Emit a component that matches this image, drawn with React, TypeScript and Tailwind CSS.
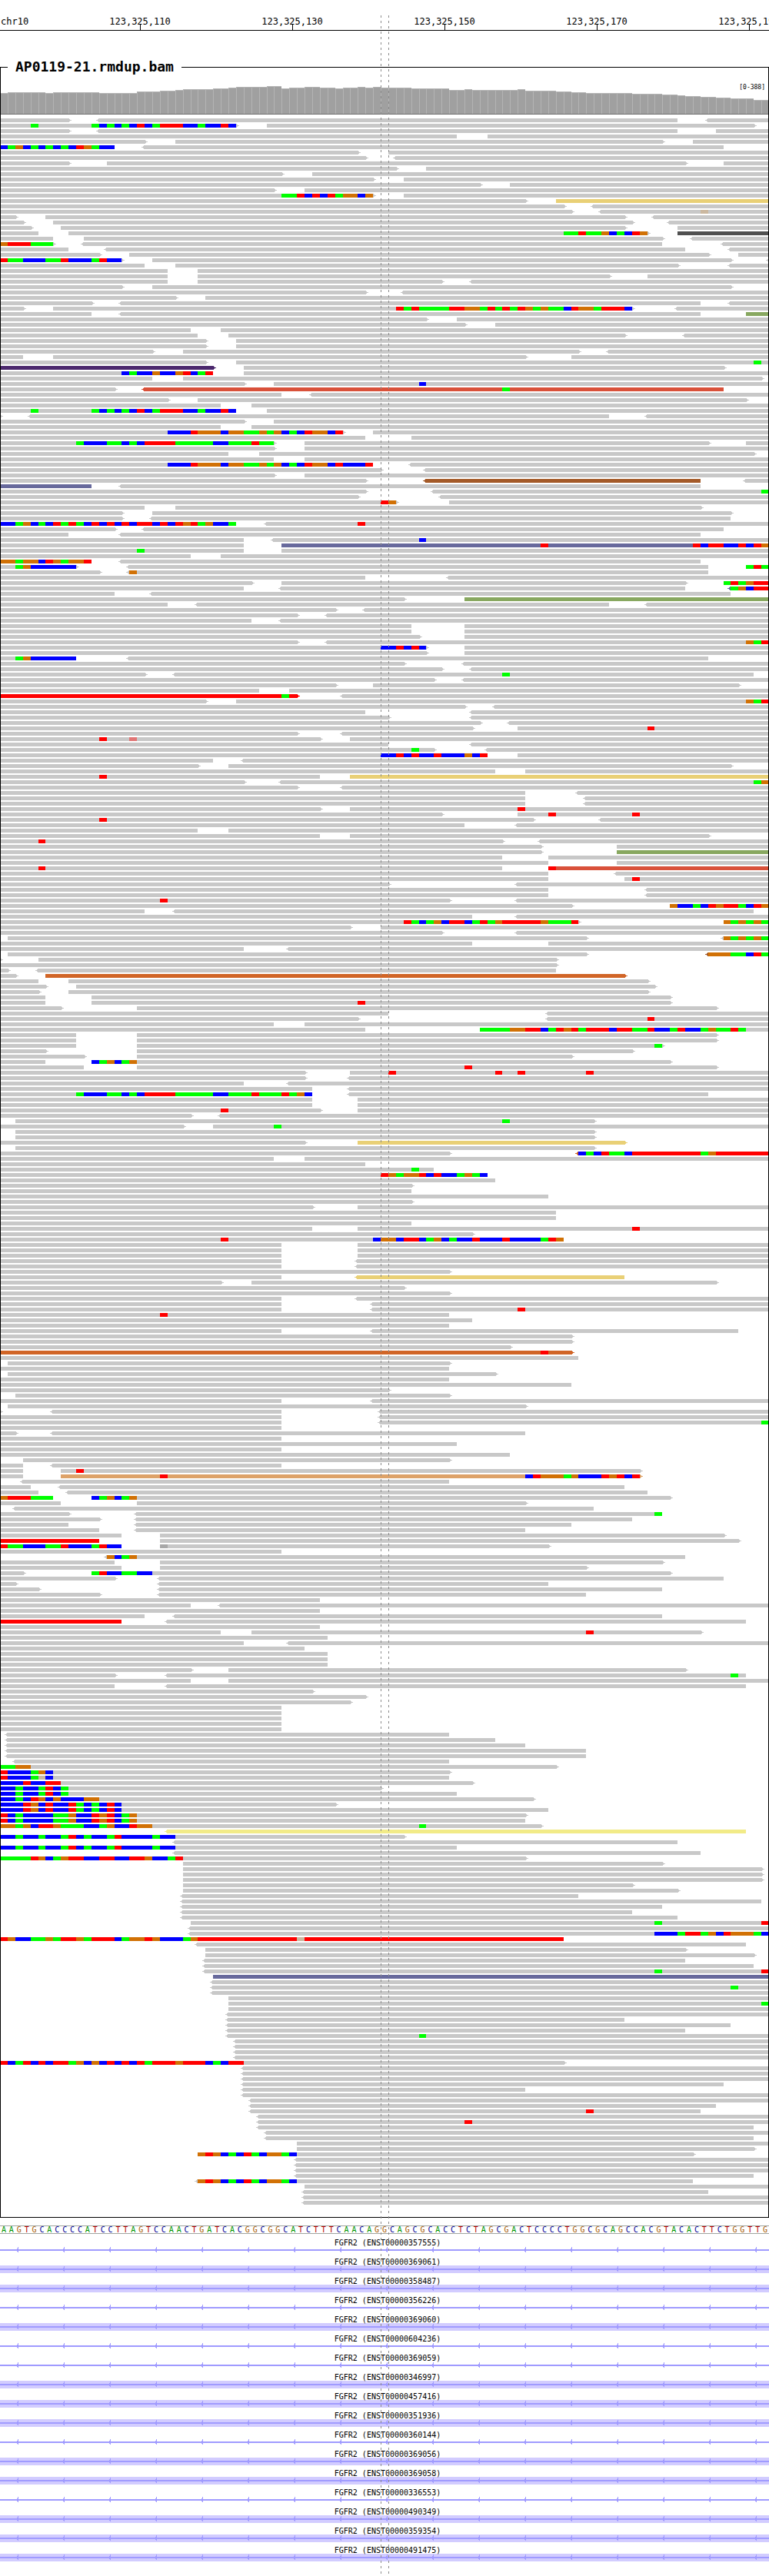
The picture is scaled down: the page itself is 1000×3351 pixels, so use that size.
import React from "react";

const BASES = 101;
const WIDTH = 1000;
const PITCH = 7;
const px = (base: number) => Math.round((base * WIDTH) / BASES);

const SEQUENCE =
  "AAGTGCACCCCATCCTTAGTCCAACTGATCACGGCGGCATCTTTCAACAGGCAGCGCACCTCTAGCGACTCCCCTGGCGCAGCCACGTACACTTCTGGTTG";

const RULER = ["123,325,110", "123,325,130", "123,325,150", "123,325,170", "123,325,190"];

/* Base colours of mismatches; lower-case letters are low-quality bases. */
const BASE_FILL: Record<string, string> = {
  A: "#00ff00",
  C: "#0000ff",
  G: "#d17105",
  T: "#ff0000",
  g: "#cbb8a0",
  t: "#e17676",
  n: "#a8a8a8",
};

/* Read colours, keyed by the letter that ends a read token. */
const READ_FILL: Record<string, string> = {
  "": "#c8c8c8",
  y: "#e9d076",
  Y: "#f2eb88",
  d: "#505050",
  g: "#88a860",
  v: "#4b286d",
  r: "#d9513a",
  b: "#a45a28",
  p: "#67699c",
  R: "#ff0000",
  o: "#d16527",
  t: "#dda269",
};

/*
 * One line per alignment row. A read is "start-end", with "<" or ">" for its
 * strand arrow and a colour letter; "position:BASES" paints mismatches.
 */
const ROWS = `0-9> <13-89 <93-101
0-31> 4:A 12:ACACACTCATTTCCACCTC 35-99>
0-9> <13-89 94-101
0-60 64-101
0-19> 23-87> 91-101
0-15 0:CAGCACACACTGACC <19-95
0-47> 51-101
0-48> <52-101
0-9> 14-90> 95-101
0-52> 56-101
0-37> 41-101
0-49> 53-101
0-63> 67-101
0-36> 40-101
0-49> 37:AATCTCTAGGCG 53-101
0-69> 73-101y
0-74> <78-101
0-75> <79-101 92:g
0-2> 6-82> <86-101
0-3> 7-83> <88-101
0-4> 8-82> 89-101
0-5 9-85> 74:AATAAGCACTG 89-101d
0-7 11-87> <91-101
0-7> 0:GTTTAAA <11-87 <95-101
0-9 <14-90 <96-101
0-13> 17-93> 97-101
0-16> 0:TAACCCAATCCCATCC 20-96> <101-102
0-19 23-89> <96-101
0-22 26-101
0-22 26-80> 85-101
0-22 26-58> <62-101
0-16> 20-96>
0-48> <53-101
0-23> 27-101
0-12> <16-92 <96-101
0-3> 7-83> 52:TATAAAATTGGATATATGAGAACTGGATTTC <89-101
0-12 <16-92 98-101g
0-56> 60-101
0-61> 65-101
0-25 29-101
0-26 30-82> <90-101
0-27> 31-101
0-27> 31-101
0-20> 24-76> <80-101
0-3 7-69> 75-101
0-27> 31-101 99:A
0-28>v 32-95>
0-28 16:CACCGCCGTCAT 32-101
0-20 24-100>
0-32> 36-101 55:C
0-15> <19-95r 66:A
0-37 <41-101
0-22> 26-98>
0-29 33-101
0-31 4:A 12:ACACACTCATTTCCACCTC 35-101
0-0> <4-80 <85-101
0-32> 36-101
0-29 33-101
0-45> 22:CCCTGGGCGGAAGAGCACTGGCT 49-101
0-48 54-101
0-36> 10:ACCCAACACTTTTAAAAACCAAATAA 40-93> 98-101
0-36> 40-101
0-30 34-99>
0-36 40-101
0-49 22:CCCTGGGCGGAAGAGCACTGGCTCCCT <54-101
0-50> <56-101
0-36> 40-101
0-48> <56-92b <98-101
0-12p <16-92
0-48> <57-101 100:A
0-47> <58-101
0-52> 50:TG 59-101
0-19 23-92>
0-16> 20-96>
0-16> <20-96
0-31 0:CCAGCACTATACTCTCTCTTCTCTGTAGCCA <35-101 47:T
0-15> <19-95
0-9 <16-92
0-32 <36-101 55:C
0-32 37-101p 71:T 91:TCTTCCTCTG
0-32 18:A 37-101
0-25 29-101
0-12 0:GGAGGCTGAGGT <16-92
0-10> 2:AGCCCCCC <17-93 98-101 98:ATA
0-13> <17-93 17:G
0-48 <59-101
0-33> 37-90> 95-101 95:ATAGTT
0-32 <37-90 <96-101p 96:AGCTT
0-15 <20-96
0-53> 61-101g
0-22 <26-80 <85-101
0-44> <48-101
0-39> <43-101
0-33 <37-101
0-54 61-101
0-54 61-101
0-55> 61-101
0-39> <43-101 98:GAT
0-56> 50:CCTCTC 61-101
0-56> 61-101
0-10 2:AGCCCCCC <17-93
0-53> <61-101
0-58> <62-101
0-19> <23-99 66:A
0-57> <61-101
0-44> 49-97>
0-34 38-101
0-39>R 37:A <45-101
0-27> 31-101 98:GAT
0-61> <65-101
0-48 <62-101
0-51> <62-101
0-63> <67-101
0-62> 68-101 85:T
0-39> <45-101
0-42> 13:T 17:t 46-101
0-51 <62-101
0-57> 54:A <64-101
0-64 50:CCTCTCCTCCCGCT 68-101
0-28 <32-101
0-26> 30-96>
0-65 69-101
0-42 13:T 46-101y
0-32> <37-101 99:AG
0-39> <45-101
0-69 <76-101
0-69 <77-101
0-69 <77-101
0-42> 46-101 68:T
0-58> 68-101 72:T 83:T
0-70> 13:T <79-101
0-61 <68-101
0-26 30-101
0-42 46-93>
0-66> 5:T <71-101
0-71> 81-101
0-71> 81-101g
0-66 72-101
0-72 81-101
0-66 5:T 72-101r 72:T
0-72 <81-101
0-72 82-101 83:T
0-51> <68-101
0-72 <85-101
0-72 <85-101
0-59> 21:T <68-101
0-75> 88-101 88:GCCACTGTTACTG
0-19 <23-99
0-62 <68-101
0-76> 53:TACAGCTTCATAGTTTTTGAAAT 95-101 95:GAGAGA
0-46> 50-101
0-58> <68-101
1-77> <95-101 95:GAGAGA
0-62 72-101
0-32 <38-101
1-77> <93-101b 93:GGGAACTA
0-0> 5-73>
0-73>
0-1> <5-73
0-2> 6-82>o
0-5 9-85>
0-6> 10-86>
0-5> 9-85>
0-6 12-88>
0-6 12-88> 47:T
0-8> 18-94>
0-51 <72-101
0-47> <72-101 85:T
0-36 40-101
0-48 63-101 63:AAAAGGTTCATGTATTTCTTAATCCATCCAGAATA
0-10 18-94>
0-10 18-94>
0-10 18-87> 86:A
0-6> 18-83>
0-11> 18-75>
0-6 12-88> 12:CAGCAG
0-11 18-94> 61:T
0-40> 46-101 51:T 65:T 68:T 77:T
0-40> <46-101
0-32 <38-101
0-41 <46-101
0-41 10:ACCCAACACTTTTAAAAACCAAATAAATAGC <46-93
0-41 47-101
0-41 47-101
0-42> 29:T 47-101
0-25> <29-101
2-78> 66:A
0-24> 28-101 36:A
2-78>
2-78>
0-40> 47-82>y
2-78>
0-59> <76-101o 76:CACTAACTTTTTTTTTAGTTTTTTT
0-36 40-101
0-48
0-57 54:A
0-64 50:TGAGGTCTCCAGAC
0-65
0-54>
0-54
0-72
0-54>
0-41> 47-101
0-73
0-73
0-54
0-41 47-101 83:T
0-62>
0-74 29:T 49:CGGCTTCAGCACCTCCCTCCCCATG
0-37 47-101
0-37 47-101
0-37 47-101
0-37 <47-101
0-37 <47-101
0-59>
0-37 <47-82y
0-29> 33-94>
0-53>
0-59>
0-37 <47-101
0-37 <49-101
0-37 <49-101 68:T
0-59 21:T
0-62
0-59
0-37 <49-97
0-75>
0-75>
0-67>
0-75>o 71:T
0-76
1-59>
0-59
1-65>
0-59
0-75
0-51>
2-59>
0-37 <49-101
1-69>
0-0> <7-37 <50-101
0-37 <50-101
0-37 <50-101 100:A
0-37
0-2> <7-69
0-37
0-60
0-37
0-67
3-59>
0-3 <7-37
0-3 8-84> 10:T
0-3 8-84>t 21:T 69:CTGGGAGCCCTGTCT
<3-59
0-4 <8-82
0-5 <9-85
0-7 0:GTTTAAA 12-88> 12:CAGCAG
0-8 18-69>
<2-78
0-9> <18-87 86:A
0-13> <18-83
0-9 <18-75
0-13 <18-69
0-16 21-95>
0-13R 21-97>
0-16 0:TAACCCAATCCCATCC 21-72> 21:n
0-37
<14-90 14:GCAG
0-15 21-87>
0-16 21-77>
0-3> 12-88> 12:ATCCAACC
0-15> <21-95
0-2> <21-72
0-5> <21-87
0-13> <21-77
0-42
0-25 <29-101
0-42
0-19 <23-87
0-16R <22-98
0-42
0-29 33-92> 77:T
0-43
0-32 <38-101
0-40
0-43
0-43
0-43
0-25> 30-90>
0-15> <22-98 96:A
0-25 30-101
0-15 <22-98
0-41>
0-48>
0-46>
0-37
0-37
0-37
0-37
0-37
<1-59
<1-65
<1-69
<1-77
<1-77
<2-59
0-73> 0:AAGG
0-59> 0:TCCCAGC
0-59 0:TCCCAgC
0-62> 0:CCCTCCTT
0-50> 0:CCACCATCA
0-60 0:CCACCATCA
0-70> 0:CCACTGCGCCCGG
0-44> 0:CCCTGCTCCTACACTC
0-72 0:CCCTGCTCCTACACTC
0-69> 0:TCACCCCAAGCCTGTCAG
0-69 0:TCACCCCAAGCCTGTCAG
0-71> 0:GGAGCTTGAAACCAGCCTGG 55:A
<22-98Y
0-53> 0:CCACCACCATCACCATCCCCACC
<23-89
0-60 0:CCACCACCATCACCATCCCCACC
<23-92
0-69> 0:AAAATGCAGTTCCTTCCTTGCCAT
24-87>
24-100>
24-100>
24-100>
24-83>
24-89>
<24-76
<24-100
<24-87
<24-83
<24-89
25-101 86:A 100:T
<25-101
<25-101 86:CCCATTAGCTGGGAC
0-74R 0:TGCCAAGATTGATTTCAGGTGCCCAG 39:g
<26-98
27-90>
27-99>
<27-90
<27-99
<27-101 86:A 100:T
28-101p
<28-101
<28-101 96:A
<28-101
30-101
30-101 100:A
30-101
<30-101
<30-82
<30-96
<30-90
<30-101 55:A
<31-101
<31-101
<31-101
<31-101
0-74> 0:TCATCTCTTAGCGCTCTCTATTTGTTTCACTT
<32-101
<32-101
<32-101
<32-95
<32-69
<32-101
<33-101
<33-94
<33-92 77:T
<34-101
<34-101 61:T
<34-99
<35-101
<35-99
39-101
39-99>
26-91> 26:GTGCACTACGGAC
<39-101
<39-101
<39-101
<39-99
<26-91 26:GTGCACTACGGAC
40-101
<40-93
<40-101
<40-101`.split("\n");

/* Coverage profile as [number of bases, bar height] runs. */
const COVERAGE: [number, number][] = [
  [1, 27], [5, 28], [1, 27], [6, 28], [5, 27], [3, 29], [2, 30], [1, 31], [4, 32], [2, 33],
  [1, 34], [4, 35], [2, 36], [1, 33], [2, 34], [2, 35], [2, 34], [1, 33], [2, 34], [1, 35],
  [1, 34], [1, 35], [4, 34], [5, 33], [2, 31], [1, 32], [6, 31], [1, 32], [4, 30], [2, 29],
  [2, 28], [6, 27], [4, 26], [2, 25], [1, 24], [2, 23], [2, 22], [2, 21], [3, 20], [2, 18],
];

const TRANSCRIPTS: [string, boolean][] = [
  ["ENST00000357555", false],
  ["ENST00000369061", true],
  ["ENST00000358487", true],
  ["ENST00000356226", false],
  ["ENST00000369060", true],
  ["ENST00000604236", false],
  ["ENST00000369059", false],
  ["ENST00000346997", true],
  ["ENST00000457416", true],
  ["ENST00000351936", true],
  ["ENST00000360144", false],
  ["ENST00000369056", true],
  ["ENST00000369058", true],
  ["ENST00000336553", false],
  ["ENST00000490349", true],
  ["ENST00000359354", true],
  ["ENST00000491475", true],
];

const LETTER_CLASS: Record<string, string> = {
  A: "text-[#009600]",
  C: "text-[#000096]",
  G: "text-[#a85c04]",
  T: "text-[#b40000]",
};

function Ruler() {
  return (
    <header className="flex h-10 overflow-hidden border-b border-black pt-[21px] text-[12px] leading-[14px]">
      <span className="w-[8.3%] shrink-0 pl-px">chr10</span>
      {RULER.map((label) => (
        <span key={label} className="relative w-[19.8%] shrink-0 text-center">
          {label}
          <i className="absolute bottom-0 left-1/2 h-2 w-px bg-black" />
        </span>
      ))}
    </header>
  );
}

function Coverage() {
  const heights = COVERAGE.flatMap(([count, height]) => Array<number>(count).fill(height));
  return (
    <div className="relative">
      <svg
        viewBox="1 0 998 50"
        preserveAspectRatio="none"
        shapeRendering="crispEdges"
        className="block h-[50px] w-full"
        role="img"
        aria-label="Coverage"
      >
        {heights.map((h, i) => (
          <g key={i}>
            <rect x={px(i)} y={49 - h} width={px(i + 1) - px(i)} height={h} fill="#b4b4b4" />
            <rect x={px(i) + 1} y={50 - h} width={px(i + 1) - px(i) - 1} height={h - 1} fill="#a0a0a0" />
          </g>
        ))}
        <rect x="0" y="49" width={WIDTH} height="1" fill="#6e6e6e" />
      </svg>
      <span className="absolute right-1 top-[10px] text-[8px] leading-[10px]">[0-388]</span>
    </div>
  );
}

function Row({ row, y }: { row: string; y: number }) {
  return (
    <>
      {row.split(" ").map((token, i) => {
        const read = /^(<?)(\d+)-(\d+)(>?)(\w?)$/.exec(token);
        if (read) {
          const [, left, from, to, right, tone] = read;
          const a = px(+from);
          const b = px(+to);
          const start = left ? `M${a},${y}h-1v1h-1v1h-2v1h2v1h1v1h1` : `M${a},${y}v5`;
          const end = right ? `H${b}h1v-1h1v-1h2v-1h-2v-1h-1v-1h-1z` : `H${b}v-5z`;
          return <path key={i} d={start + end} fill={READ_FILL[tone]} />;
        }
        const [pos, bases] = token.split(":");
        return [...bases].map((base, k) => {
          const x = px(+pos + k);
          return (
            <rect key={`${i}-${k}`} x={x} y={y} width={px(+pos + k + 1) - x} height={5} fill={BASE_FILL[base]} />
          );
        });
      })}
    </>
  );
}

function Alignments() {
  return (
    <svg
      viewBox="1 0 998 2735"
      preserveAspectRatio="none"
      shapeRendering="crispEdges"
      className="block h-[2735px] w-full"
      role="img"
      aria-label="Aligned reads"
    >
      {ROWS.map((row, i) => (
        <Row key={i} row={row} y={5 + i * PITCH} />
      ))}
    </svg>
  );
}

function Reference() {
  return (
    <div className="mt-[10px] grid h-[11px] grid-cols-[repeat(101,minmax(0,1fr))] border-y border-[#a0a5a0] text-center text-[10px] leading-[9px]">
      {[...SEQUENCE].map((base, i) => (
        <span key={i} className={LETTER_CLASS[base]}>
          {base}
        </span>
      ))}
    </div>
  );
}

function Transcript({ id, coding }: { id: string; coding: boolean }) {
  return (
    <li className="mb-[5px]">
      <div className="relative z-10 h-[10px] pl-2 text-center text-[10px] leading-[12px]">FGFR2 ({id})</div>
      <svg
        viewBox="0 0 1000 10"
        preserveAspectRatio="none"
        shapeRendering="crispEdges"
        className="block h-[10px] w-full"
        aria-hidden="true"
      >
        {coding && <rect width="1000" height="10" fill="#d2ccff" />}
        <rect y="4" width="1000" height="2" fill="#a09bff" />
        {Array.from({ length: 17 }, (_, i) => (
          <path key={i} d={`M${21 + i * 60},4h1v-1h1v-2h1v7h-1v-1h-1v-1h-1z`} fill="#a09bff" />
        ))}
      </svg>
    </li>
  );
}

function CenterLines() {
  return (
    <svg
      viewBox="0 0 1000 3331"
      preserveAspectRatio="none"
      shapeRendering="crispEdges"
      className="pointer-events-none absolute inset-x-0 bottom-0 top-5 z-20 h-[calc(100%-20px)] w-full"
      aria-hidden="true"
    >
      {[495, 505].map((x) => (
        <path key={x} d={`M${x}.5,0V3331`} stroke="#8c8c8c" strokeWidth="1" strokeDasharray="3 4" />
      ))}
    </svg>
  );
}

export default function App() {
  return (
    <main className="relative overflow-hidden bg-white pb-[14px] font-['DejaVu_Sans_Mono',monospace] text-black">
      <Ruler />
      <fieldset className="mt-[35px] min-w-0 border border-black">
        <legend className="ml-[9px] px-[10px] text-[18px] font-bold leading-6">AP0119-21.rmdup.bam</legend>
        <Coverage />
        <Alignments />
      </fieldset>
      <Reference />
      <ul className="mt-[6px]">
        {TRANSCRIPTS.map(([id, coding]) => (
          <Transcript key={id} id={id} coding={coding} />
        ))}
      </ul>
      <CenterLines />
    </main>
  );
}
